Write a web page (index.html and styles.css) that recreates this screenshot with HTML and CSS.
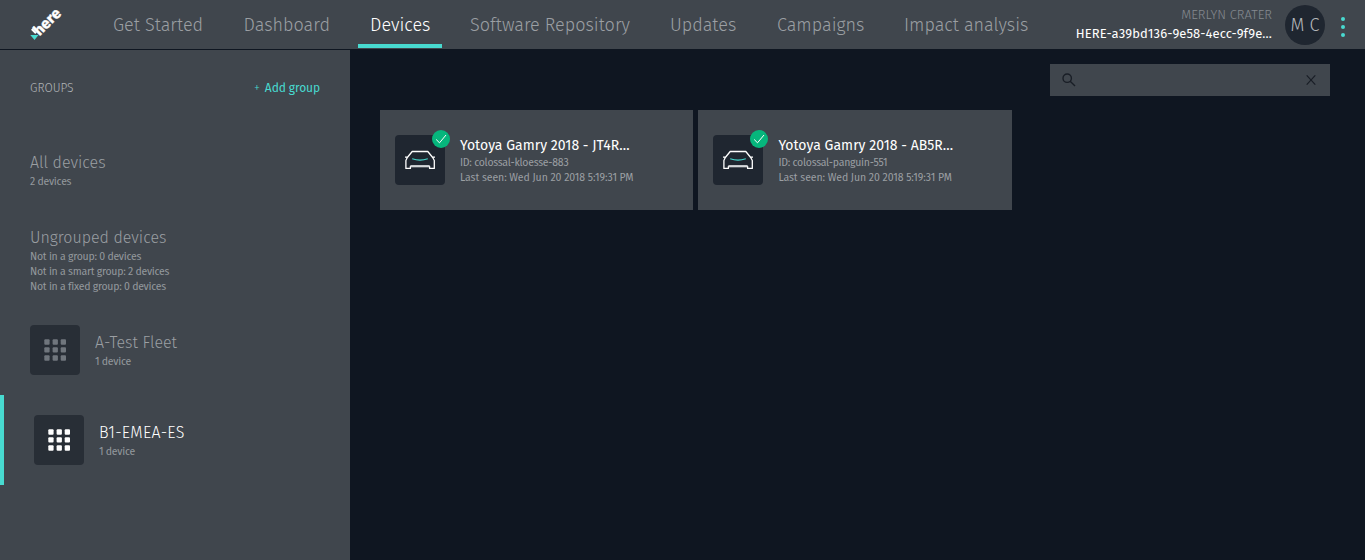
FILE: index.html
```html
<!DOCTYPE html>
<html lang="en">
<head>
<meta charset="utf-8">
<title>Devices</title>
<link rel="stylesheet" href="styles.css">
</head>
<body>
<svg class="defs" aria-hidden="true">
  <symbol id="grid" viewBox="0 0 22 22">
    <g fill="currentColor"><rect x=".3" y=".2" width="5.300" height="5.500" rx="1"/><rect x="8.600" y=".2" width="5.300" height="5.500" rx="1"/><rect x="16.700" y=".2" width="5.300" height="5.500" rx="1"/><rect x=".3" y="8.200" width="5.300" height="5.300" rx="1"/><rect x="8.600" y="8.200" width="5.300" height="5.300" rx="1"/><rect x="16.700" y="8.200" width="5.300" height="5.300" rx="1"/><rect x=".3" y="16.300" width="5.300" height="5.500" rx="1"/><rect x="8.600" y="16.300" width="5.300" height="5.500" rx="1"/><rect x="16.700" y="16.300" width="5.300" height="5.500" rx="1"/></g>
  </symbol>
  <symbol id="car" viewBox="0 0 50 50">
    <path d="M10 22.200H12.500M37.500 22.200H40M12.300 22.500L17.200 16.500H32.800L37.700 22.500L39.300 25.500V33.400H34.600V31.500H15.400V33.400H10.900V25.500L12.300 22.500" fill="none" stroke="#fff" stroke-width="1.300" stroke-linejoin="round"/>
    <path d="M15.500 31H34.500" stroke="#d0d3d6" stroke-width="1.800"/>
    <path d="M17.200 23.800Q25 26.400 32.800 23.800" fill="none" stroke="#48dad0" stroke-width="1.200"/>
  </symbol>
  <symbol id="check" viewBox="0 0 18 18">
    <circle cx="9" cy="9" r="9" fill="#06b67c"/>
    <path d="M4.200 9.500L7.500 12.800L14 5" fill="none" stroke="#fff" stroke-width="1"/>
  </symbol>
</svg>
<header class="topbar">
  <svg class="logo" viewBox="0 0 40 44">
    <path d="M1.300 35H9.500L5.500 40Z" fill="#48dad0"/>
    <path d="M2.800 29L7 33.200" stroke="#fff" stroke-width="2.200"/>
    <text class="logo-text" transform="translate(10.600 36.600) rotate(-45)" textLength="31.500" lengthAdjust="spacingAndGlyphs">here</text>
  </svg>
  <nav class="nav">
    <a class="nav-item get-started">Get Started</a>
    <a class="nav-item dashboard">Dashboard</a>
    <a class="nav-item devices active">Devices</a>
    <a class="nav-item software">Software Repository</a>
    <a class="nav-item updates">Updates</a>
    <a class="nav-item campaigns">Campaigns</a>
    <a class="nav-item impact">Impact analysis</a>
  </nav>
  <div class="account">
    <div class="account-name">MERLYN CRATER</div>
    <div class="account-id">HERE-a39bd136-9e58-4ecc-9f9e…</div>
  </div>
  <div class="avatar">M C</div>
  <div class="menu"><i></i><i></i><i></i></div>
</header>
<div class="layout">
  <aside class="sidebar">
    <div class="sidebar-head">
      <span class="sidebar-title">GROUPS</span>
      <a class="add-group"><span class="plus">+</span><span class="add-label">Add group</span></a>
    </div>
    <section class="group all">
      <h2>All devices</h2>
      <p>2 devices</p>
    </section>
    <section class="group ungrouped">
      <h2>Ungrouped devices</h2>
      <p>Not in a group: 0 devices</p>
      <p>Not in a smart group: 2 devices</p>
      <p>Not in a fixed group: 0 devices</p>
    </section>
    <section class="fleet">
      <div class="tile"><svg><use href="#grid"/></svg></div>
      <div class="fleet-text"><h2>A-Test Fleet</h2><p>1 device</p></div>
    </section>
    <section class="fleet selected">
      <div class="tile"><svg><use href="#grid"/></svg></div>
      <div class="fleet-text"><h2>B1-EMEA-ES</h2><p>1 device</p></div>
    </section>
  </aside>
  <main class="content">
    <div class="search">
      <svg class="magnifier" viewBox="0 0 14 14"><circle cx="5.200" cy="5.200" r="4.200"/><path d="M8.200 8.200L13 13"/></svg>
      <svg class="clear" viewBox="0 0 10 10"><path d="M.7 .3L9.300 9.700M9.300 .3L.7 9.700"/></svg>
    </div>
    <div class="cards">
      <article class="card">
        <div class="device-tile"><svg class="car"><use href="#car"/></svg><svg class="check"><use href="#check"/></svg></div>
        <div class="card-text">
          <h3>Yotoya Gamry 2018 - JT4R…</h3>
          <p>ID: colossal-kloesse-883</p>
          <p class="seen">Last seen: Wed Jun 20 2018 5:19:31 PM</p>
        </div>
      </article>
      <article class="card">
        <div class="device-tile"><svg class="car"><use href="#car"/></svg><svg class="check"><use href="#check"/></svg></div>
        <div class="card-text">
          <h3>Yotoya Gamry 2018 - AB5R…</h3>
          <p>ID: colossal-panguin-551</p>
          <p class="seen">Last seen: Wed Jun 20 2018 5:19:31 PM</p>
        </div>
      </article>
    </div>
  </main>
</div>
</body>
</html>
```
FILE: styles.css
```css
* { box-sizing: border-box; }
body {
  margin: 0;
  height: 560px;
  overflow: hidden;
  background: #0f1621;
  color: #9b9fa3;
  font-family: "Fira Sans", "Open Sans", "Noto Sans", sans-serif;
  font-weight: 300;
  white-space: nowrap;
}
h2, h3, p { margin: 0; font-weight: 300; }
.defs { position: absolute; width: 0; height: 0; }

.topbar { display: flex; height: 49px; background: #40464d; }
.logo { width: 40px; height: 44px; margin-left: 29px; flex: none; }
.logo-text {
  fill: #fff;
  stroke: #fff;
  stroke-width: .4px;
  font-size: 15px;
  font-weight: 700;
}
.nav { display: flex; gap: 16px; margin-left: 32px; flex: none; }
.nav-item {
  height: 48px;
  padding: 0 12px;
  font-size: 18px;
  line-height: 51px;
  border-bottom: 4px solid transparent;
}
.nav-item.active { color: #fff; border-color: #48dad0; }
.get-started { width: 114.5px; }
.dashboard { width: 110.5px; }
.devices { width: 84px; }
.software { width: 184px; }
.updates { width: 91px; }
.campaigns { width: 111px; }
.impact { width: 148px; }

.account { width: 232px; flex: none; text-align: right; padding-top: 5px; font-size: 13px; }
.account-name { height: 19px; line-height: 20px; color: #858a90; }
.account-id { height: 19px; line-height: 20px; color: #fff; font-weight: 400; letter-spacing: .1px; }
.avatar {
  width: 40px;
  height: 40px;
  margin: 5px 0 0 13px;
  flex: none;
  border-radius: 50%;
  background: #1f2630;
  color: #b5b8bb;
  font-size: 18px;
  line-height: 41px;
  text-align: center;
}
.menu { display: flex; flex-direction: column; gap: 4px; margin: 17px 0 0 16px; }
.menu i { width: 4px; height: 4px; border-radius: 50%; background: #48dad0; }

.layout { display: flex; height: 510px; margin-top: 1px; }
.sidebar { width: 350px; flex: none; background: #40464d; }
.sidebar-head {
  display: flex;
  justify-content: space-between;
  height: 95px;
  padding: 28px 30px 0;
  font-size: 12px;
  line-height: 21px;
}
.sidebar-title { color: #b0b4b7; }
.add-group { display: flex; gap: 5px; color: #48dad0; }
.add-label { font-weight: 400; letter-spacing: -.1px; }
.group { padding: 0 30px; }
.all { height: 75px; }
.ungrouped { height: 85px; }
h2 { height: 29px; font-size: 16px; line-height: 36px; }
p { height: 15px; font-size: 10.5px; font-weight: 400; letter-spacing: -.25px; }
.sidebar p { line-height: 16px; color: #94999d; }
.fleet { display: flex; align-items: center; gap: 15px; height: 90px; padding-left: 30px; }
.tile {
  display: grid;
  place-items: center;
  width: 50px;
  height: 50px;
  border-radius: 4px;
  background: #282e36;
  color: #70767d;
}
.tile svg { width: 22px; height: 22px; }
.fleet-text { height: 50px; }
.selected { border-left: 4px solid #48dad0; }
.selected .tile, .selected h2 { color: #fff; }
.selected h2 { letter-spacing: .3px; }

.content { flex: 1; padding: 14px 35px 0 30px; }
.search {
  display: flex;
  justify-content: space-between;
  align-items: center;
  width: 280px;
  height: 32px;
  margin-left: auto;
  padding: 0 14px 0 12px;
  background: #40464d;
}
.search svg { fill: none; stroke: #191e26; stroke-width: 1.4; }
.magnifier { width: 14px; height: 14px; }
.clear { width: 10px; height: 10px; }
.search .clear { stroke-width: 1.1; }
.cards { display: flex; gap: 5px; margin-top: 14px; }
.card { display: flex; width: 313.4px; height: 100px; padding: 25px 15px; background: #40464d; }
.device-tile {
  position: relative;
  width: 50px;
  height: 50px;
  margin-right: 15px;
  flex: none;
  border-radius: 4px;
  background: #1f2630;
}
.car { display: block; width: 50px; height: 50px; }
.check { position: absolute; top: -5px; right: -5px; width: 18px; height: 18px; }
h3 { height: 19px; font-size: 14px; font-weight: 400; line-height: 22px; letter-spacing: .03px; color: #fff; }
.card p { line-height: 17px; }
.card .seen { letter-spacing: -.06px; }
```
